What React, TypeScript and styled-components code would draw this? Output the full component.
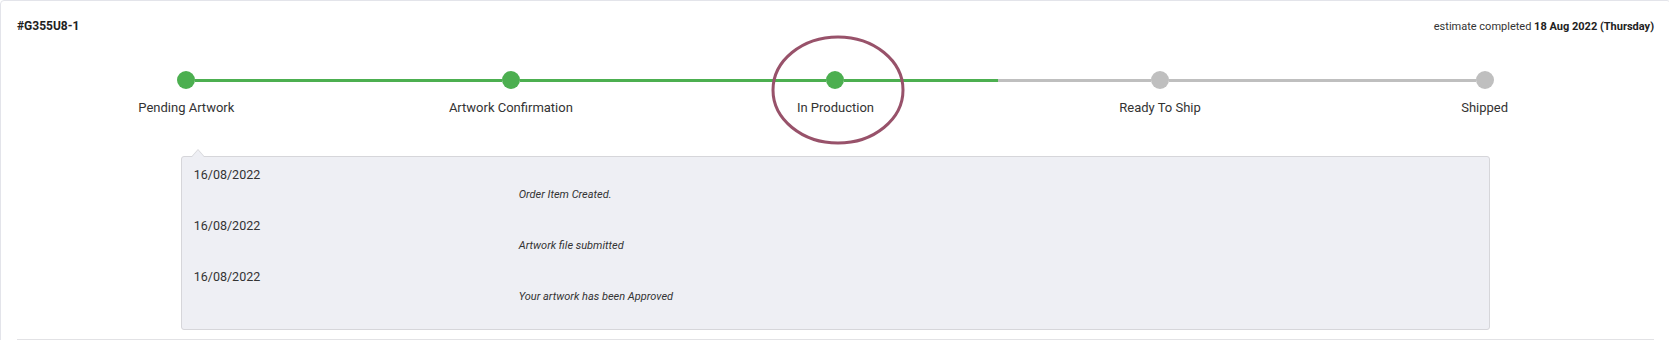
import React from "react";
import styled, { createGlobalStyle } from "styled-components";

const GlobalStyle = createGlobalStyle`
  body {
    margin: 0;
    overflow: hidden;
    background: #ffffff;
    font-family: Roboto, "Liberation Sans", sans-serif;
    color: #333333;
  }
`;

type StepState = "done" | "todo";

const steps: { name: string; state: StepState }[] = [
  { name: "Pending Artwork", state: "done" },
  { name: "Artwork Confirmation", state: "done" },
  { name: "In Production", state: "done" },
  { name: "Ready To Ship", state: "todo" },
  { name: "Shipped", state: "todo" },
];

const history = [
  { date: "16/08/2022", note: "Order Item Created." },
  { date: "16/08/2022", note: "Artwork file submitted" },
  { date: "16/08/2022", note: "Your artwork has been Approved" },
];

const App = () => {
  return (
    <>
      <GlobalStyle />
      <Card>
        <Section>
          <Header>
            <OrderNo>#G355U8-1</OrderNo>
            <Estimate>
              estimate completed <b>18 Aug 2022 (Thursday)</b>
            </Estimate>
          </Header>
          <Stepper>
            {steps.map((s, i) => (
              <Step key={s.name}>
                <Track>
                  <Segment state={i === 0 ? "none" : s.state} />
                  <Dot state={s.state} />
                  <Segment state={i === steps.length - 1 ? "none" : s.state} />
                </Track>
                <StepLabel>{s.name}</StepLabel>
              </Step>
            ))}
          </Stepper>
          <HistoryBox>
            {history.map((h, i) => (
              <HistoryRow key={i}>
                <HistoryDate>{h.date}</HistoryDate>
                <HistoryNote>{h.note}</HistoryNote>
              </HistoryRow>
            ))}
          </HistoryBox>
        </Section>
        <Highlight width="140" height="116" viewBox="0 0 140 116">
          <ellipse cx="70" cy="58" rx="65" ry="53" fill="none" stroke="#98526a" strokeWidth="3" />
        </Highlight>
      </Card>
    </>
  );
};

export default App;

const Card = styled.div`
  position: relative;
  box-sizing: border-box;
  width: 1671px;
  min-height: 360px;
  padding: 16px 16px 0;
  border: 1px solid #e3e4ea;
  border-radius: 4px;
  background: #fff;
`;

const Section = styled.div`
  padding-bottom: 9px;
  border-bottom: 1px solid #e2e2e5;
`;

const Header = styled.div`
  display: flex;
  align-items: center;
  justify-content: space-between;
  height: 18px;
`;

const OrderNo = styled.div`
  font-size: 12px;
  font-weight: 700;
  color: #222;
`;

const Estimate = styled.div`
  font-size: 11px;
  color: #333;
  b {
    font-weight: 700;
    color: #222;
  }
`;

const Stepper = styled.div`
  display: flex;
  margin-top: 36px;
  padding: 0 7px;
`;

const Step = styled.div`
  flex: 1;
  display: flex;
  flex-direction: column;
  align-items: center;
`;

const Track = styled.div`
  display: flex;
  align-items: center;
  width: 100%;
  height: 18px;
`;

const colors = {
  done: "#4caf50",
  todo: "#bfbfbf",
  none: "transparent",
};

const Segment = styled.div<{ state: StepState | "none" }>`
  flex: 1;
  height: 3px;
  background: ${(p) => colors[p.state]};
`;

const Dot = styled.div<{ state: StepState }>`
  width: 18px;
  height: 18px;
  border-radius: 50%;
  flex: none;
  background: ${(p) => colors[p.state]};
`;

const StepLabel = styled.div`
  margin-top: 9px;
  font-size: 13px;
  line-height: 20px;
  color: #333;
`;

const HistoryBox = styled.div`
  position: relative;
  width: 80%;
  margin: 38px auto 0;
  padding: 8px 12px 11px;
  box-sizing: border-box;
  background: #eeeff4;
  border: 1px solid #d6d6da;
  border-radius: 3px;

  &::before,
  &::after {
    content: "";
    position: absolute;
    left: 9px;
    border-style: solid;
    border-color: transparent;
  }
  &::before {
    top: -8px;
    border-width: 0 7px 8px;
    border-bottom-color: #d6d6da;
  }
  &::after {
    top: -7px;
    left: 10px;
    border-width: 0 6px 7px;
    border-bottom-color: #eeeff4;
  }
`;

const HistoryRow = styled.div`
  display: grid;
  grid-template-columns: 325px 1fr;
  grid-template-rows: 20px 18px;
  margin-bottom: 13px;
`;

const HistoryDate = styled.div`
  grid-column: 1;
  grid-row: 1;
  font-size: 12.5px;
  line-height: 20px;
  color: #333;
`;

const HistoryNote = styled.div`
  grid-column: 2;
  grid-row: 2;
  padding-top: 2px;
  font-size: 11px;
  line-height: 16px;
  font-style: italic;
  color: #333;
`;

const Highlight = styled.svg`
  position: absolute;
  left: 767px;
  top: 31px;
  pointer-events: none;
`;
